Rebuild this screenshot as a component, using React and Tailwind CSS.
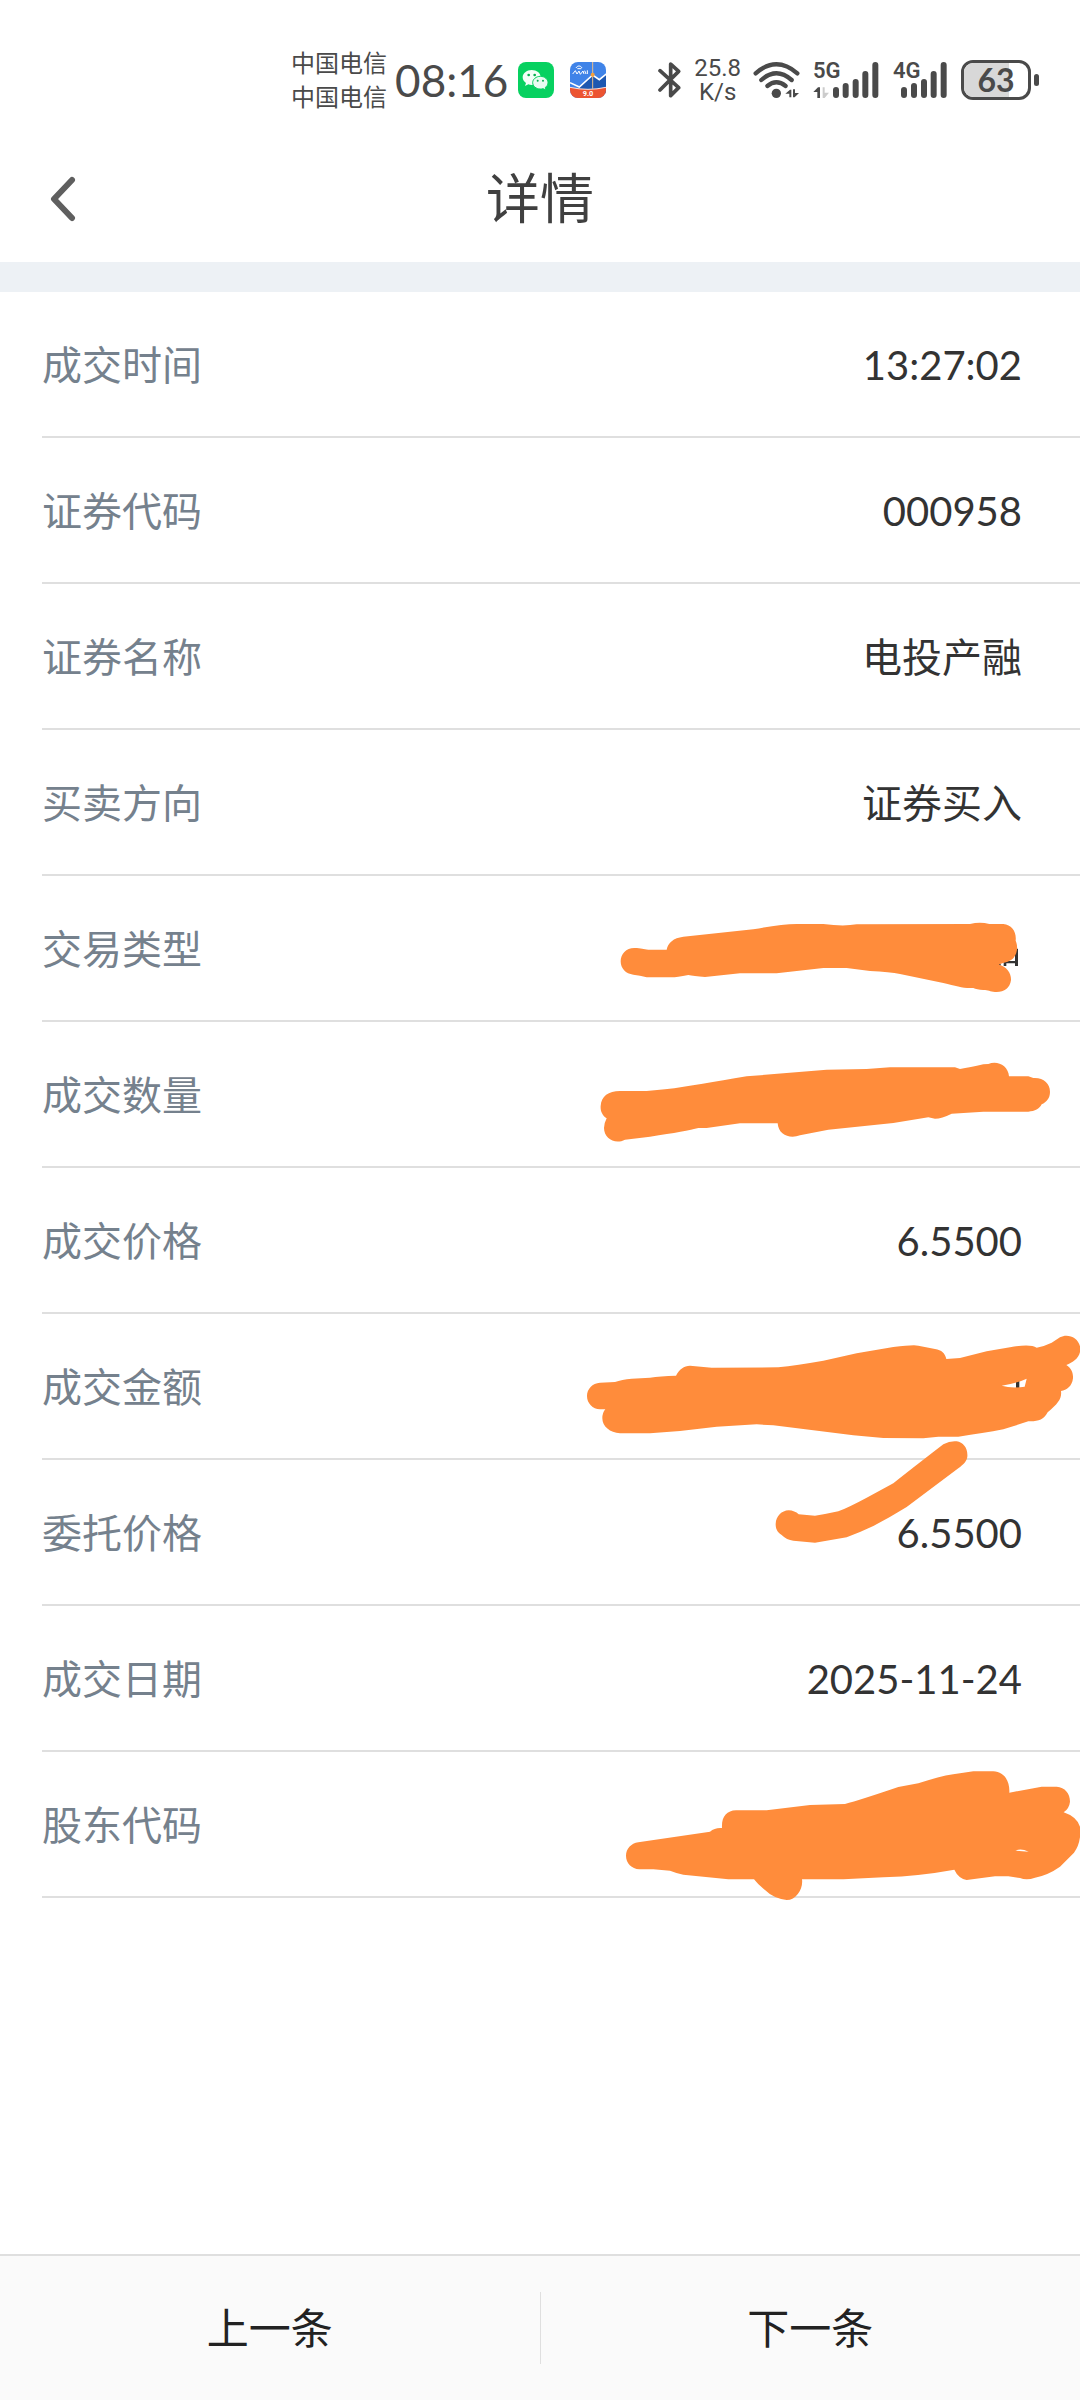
const ORANGE = "#ff8c3b";

const rows = [
  { label: "成交时间", value: "13:27:02" },
  { label: "证券代码", value: "000958" },
  { label: "证券名称", value: "电投产融" },
  { label: "买卖方向", value: "证券买入" },
  { label: "交易类型", mark: "type" },
  { label: "成交数量", mark: "amount" },
  { label: "成交价格", value: "6.5500" },
  { label: "成交金额", mark: "total" },
  { label: "委托价格", value: "6.5500", mark: "price" },
  { label: "成交日期", value: "2025-11-24" },
  { label: "股东代码", mark: "holder" },
];

// brush strokes, three units to one pixel
const marks = {
  type: {
    viewBox: "-60 -42 1560 438",
    d: "M163 174C185 174 190 178 205 179L260 179C264 158 280 144 310 140L520 118Q600 103 650 102L730 102Q790 110 830 103L1170 102Q1200 94 1228 102L1270 102C1295 104 1310 125 1307 152C1315 170 1312 190 1300 205C1285 218 1270 218 1256 224C1280 228 1294 250 1293 270C1290 295 1270 308 1245 306C1230 305 1225 300 1210 300Q1190 299 1180 294C1150 296 1130 288 1090 279L960 252Q930 246 870 243L800 234L730 234L590 250L480 250L375 261Q340 258 325 255Q290 262 275 262L200 262Q180 256 160 254C137 252 122 235 122 214C122 192 138 174 163 174Z",
    under: "M1305 176h9v52h-9v-8h-26v8h-8v-15h34zM1252 222h10v6z",
  },
  amount: {
    viewBox: "-60 396 1560 438",
    d: "M120 603L200 603L255 598C330 590 400 575 500 559L740 539L860 537L930 532L1125 532L1140 537Q1170 532 1210 523L1225 522C1250 510 1285 525 1287 559L1345 559L1360 564C1390 562 1410 580 1410 605C1410 625 1400 635 1385 643C1378 657 1365 664 1345 665L1210 665L1115 671Q1085 686 1065 686L1045 682L940 699L745 719L660 736C630 748 595 735 593 700L480 700L380 714L355 714Q320 724 210 740L135 749C105 765 72 745 72 714Q72 700 80 685C65 675 61 660 62 648C64 618 85 604 120 603Z",
  },
  total: {
    viewBox: "0 12 1560 438",
    d: "M120 218L165 216Q185 208 215 206L270 203Q300 198 348 197C358 178 372 167 390 167L455 173L655 172Q710 166 790 152L890 130L1000 111Q1060 104 1075 107L1125 117C1145 120 1155 130 1159 147L1200 144L1280 124L1350 112Q1410 100 1430 113Q1455 108 1475 98L1500 82C1525 68 1562 85 1561 120C1558 145 1540 155 1519 165C1535 175 1540 190 1539 205C1536 230 1520 240 1503 243C1506 265 1495 280 1463 307C1450 330 1435 335 1405 334L1330 358Q1270 370 1195 380L1135 380L1090 385L970 384L880 376L640 346L590 343L470 350L360 363L270 370L180 370C150 368 127 350 127 325Q127 308 136 298L120 298C98 297 81 280 81 258C81 237 97 219 120 218ZM1325 227Q1370 220 1400 206L1394 230Q1355 236 1325 227Z",
    under: "M1368 200h10v40h-10z",
  },
  price: {
    viewBox: "0 450 1560 438",
    d: "M686 601Q704 602 716 613L765 617Q800 612 835 604Q870 590 920 563L1000 520Q1050 480 1150 403Q1170 392 1190 394C1210 397 1224 415 1222 440C1220 455 1210 463 1195 475L1040 591Q990 622 940 648Q900 667 860 682L765 698L700 692Q680 690 665 675C650 665 647 655 647 642C648 618 665 602 686 601Z",
  },
  holder: {
    viewBox: "-120 6 1560 438",
    d: "M115 277L330 245Q345 232 366 234C364 200 380 182 408 181L500 181L630 165L735 162Q780 150 895 111L955 100Q1030 75 1080 70L1120 64L1180 64C1210 65 1230 90 1228 128L1325 110L1370 110C1395 112 1410 130 1410 155Q1408 175 1391 187Q1430 200 1440 230L1440 262Q1436 290 1422 308L1380 350Q1345 375 1305 383Q1280 392 1260 384L1225 379L1185 379L1100 390Q1075 385 1063 359Q960 378 850 382L730 388L606 388C610 415 590 450 560 450Q520 445 495 420Q475 405 462 388L385 388L250 374Q230 370 210 362L160 358L118 358C95 356 78 340 78 317C78 297 93 280 115 277ZM1246 302Q1262 293 1286 305Q1265 303 1246 302Z",
  },
};

function Mark({ name }) {
  const { viewBox, d, under } = marks[name];
  return (
    <svg
      viewBox={viewBox}
      className="absolute top-0 right-0 w-[520px] h-[146px] overflow-visible"
      aria-hidden="true"
    >
      {under && <path d={under} fill="#333" />}
      <path d={d} fill={ORANGE} fillRule="evenodd" />
    </svg>
  );
}

function WechatIcon() {
  return (
    <svg viewBox="0 0 108 108" className="size-9" aria-hidden="true">
      <rect width="108" height="108" rx="24" fill="#07d160" />
      <path d="M41 24c-15 0-27 10-27 22 0 7 4 13 10 17l-3 9 10-5c3 1 7 2 10 2 15 0 27-10 27-23S56 24 41 24z" fill="#f4fff8" />
      <path d="M67 43c-13 0-23 9-23 19s10 19 23 19c3 0 6 0 8-1l9 4-2-8c5-3 8-8 8-14 0-10-10-19-23-19z" fill="#e9fbf1" stroke="#07d160" strokeWidth="3" />
      <circle cx="32" cy="39" r="4" fill="#07b050" />
      <circle cx="50" cy="39" r="4" fill="#07b050" />
      <circle cx="59" cy="56" r="3" fill="#07b050" />
      <circle cx="75" cy="56" r="3" fill="#07b050" />
    </svg>
  );
}

function StockIcon() {
  return (
    <svg viewBox="0 0 108 108" className="size-9" aria-hidden="true">
      <clipPath id="stock">
        <rect width="108" height="108" rx="24" />
      </clipPath>
      <g clipPath="url(#stock)">
        <path d="M0 0h108v108H0z" fill="#3f83e8" />
        <path d="M28 76l40-36 20 14 20-18v60H28z" fill="#1d57b0" />
        <path d="M0 62l28 13 40-36 20 14 22-18" fill="none" stroke="#fff" strokeWidth="5" />
        <path d="M68 0v80" stroke="#e8bd8a" strokeWidth="3" />
        <circle cx="68" cy="38" r="6" fill="#f5a03a" />
        <path d="M8 36l8-10 5 10 6-9 4 10 8-10 3 9M44 26l4 10M52 25v11M18 18c4-8 14-8 18 0M22 20h12" fill="none" stroke="#fff" strokeWidth="3" />
        <path d="M0 76q54 12 108 0v32H0z" fill="#ec5431" />
        <path d="M0 76q54 12 108 0" fill="none" stroke="#fbe3dc" strokeWidth="3" />
        <text x="54" y="103" textAnchor="middle" fontSize="22" fontWeight="700" fontFamily="Roboto, sans-serif" fill="#fff">9.0</text>
      </g>
    </svg>
  );
}

function BluetoothIcon() {
  return (
    <svg viewBox="0 0 72 108" className="w-6 h-9" aria-hidden="true">
      <path d="M6 26l56 51-24 24V6l24 22L6 84" fill="none" stroke="#4a4a4a" strokeWidth="11" strokeLinecap="round" strokeLinejoin="round" />
    </svg>
  );
}

function WifiIcon() {
  return (
    <svg viewBox="0 0 144 108" className="w-12 h-9" fill="none" aria-hidden="true">
      <g stroke="#4a4a4a" strokeWidth="13" strokeLinecap="round">
        <path d="M8 34Q70-20 133 34" />
        <path d="M25 54Q70 14 116 54" />
        <path d="M43 72Q70 50 98 72" />
      </g>
      <circle cx="70" cy="94" r="14" fill="#4a4a4a" />
      <path d="M97 95l14-12h4v23h-6V95zM120 82h6v11h12l-13 13h-5z" fill="#4a4a4a" />
    </svg>
  );
}

function SignalLabel({ children }) {
  return (
    <span className="absolute top-0 left-0 font-[Roboto,sans-serif] text-[22px] leading-[18px] font-semibold">
      {children}
    </span>
  );
}

function Signal5G() {
  return (
    <div className="relative">
      <SignalLabel>5G</SignalLabel>
      <svg viewBox="0 0 198 108" className="w-[66px] h-9" aria-hidden="true">
        <path d="M69 84v15M98 72v27M128 60v39M157 36v63M187 9v90" stroke="#4a4a4a" strokeWidth="18" strokeLinecap="round" />
        <path d="M1 90l14-14h6v32h-8V90z" fill="#4a4a4a" />
        <path d="M29 76h6v16h13l-13 16h-6z" fill="#ccc" />
      </svg>
    </div>
  );
}

function Signal4G() {
  return (
    <div className="relative">
      <SignalLabel>4G</SignalLabel>
      <svg viewBox="0 0 162 108" className="w-[54px] h-9" aria-hidden="true">
        <path d="M33 84v15M63 72v27M93 60v39M122 36v63M152 9v90" stroke="#4a4a4a" strokeWidth="18" strokeLinecap="round" />
      </svg>
    </div>
  );
}

function Battery({ level }) {
  return (
    <div className="flex items-center gap-[3px]">
      <div className="relative flex items-center justify-center w-[70px] h-10 rounded-xl border-3 border-[#4a4a4a] overflow-hidden">
        <div className="absolute inset-y-0 left-0 bg-[#d8d8d8]" style={{ width: `${level + 7}%` }} />
        <span className="relative font-[Lato,sans-serif] text-[32px] leading-8 font-bold">{level}</span>
      </div>
      <div className="w-[5px] h-3 rounded-full bg-[#4a4a4a]" />
    </div>
  );
}

function StatusBar() {
  return (
    <div className="flex items-center justify-end h-[136px] pt-6 pr-[41px] text-[#4a4a4a]">
      <div className="text-2xl leading-[34px]">
        <p>中国电信</p>
        <p>中国电信</p>
      </div>
      <span className="ml-2 mr-[10px] text-[44px] leading-[48px]">08:16</span>
      <div className="flex gap-4 mr-[52px]">
        <WechatIcon />
        <StockIcon />
      </div>
      <BluetoothIcon />
      <div className="mx-3 font-[Roboto,sans-serif] text-2xl leading-6 text-center">
        <p>25.8</p>
        <p>K/s</p>
      </div>
      <WifiIcon />
      <div className="flex gap-[14px] ml-3 mr-[14px]">
        <Signal5G />
        <Signal4G />
      </div>
      <Battery level={63} />
    </div>
  );
}

export default function App() {
  return (
    <div className="flex flex-col min-h-screen bg-white font-[Lato,'Noto_Sans_CJK_SC',sans-serif]">
      <StatusBar />
      <header className="relative flex items-center justify-center h-[126px]">
        <button className="absolute left-0 inset-y-0 px-[50px]" aria-label="返回">
          <svg viewBox="0 0 26 46" className="w-[26px] h-[46px]" aria-hidden="true">
            <path d="M22 4L4 23L22 42" fill="none" stroke="#5f5f5f" strokeWidth="6" strokeLinecap="round" strokeLinejoin="round" />
          </svg>
        </button>
        <h1 className="text-[54px] leading-[60px] text-[#404040]">详情</h1>
      </header>
      <div className="h-[30px] bg-[#edf1f5]" />
      <dl>
        {rows.map((row) => (
          <div key={row.label} className="relative">
            <div className="flex items-center justify-between h-[146px] ml-[42px] pr-[58px] pt-[2px] border-b-2 border-[#dfdfdf] text-[40px] leading-[60px]">
              <dt className="text-[#75818d]">{row.label}</dt>
              <dd className="text-[#333]">{row.value}</dd>
            </div>
            {row.mark && <Mark name={row.mark} />}
          </div>
        ))}
      </dl>
      <footer className="flex items-center h-[146px] mt-auto border-t-2 border-[#dfdfdf] bg-[#fafafa] text-[42px] text-[#222]">
        <button className="flex-1 h-full">上一条</button>
        <div className="w-px h-[72px] bg-[#dfdfdf]" />
        <button className="flex-1 h-full">下一条</button>
      </footer>
    </div>
  );
}
